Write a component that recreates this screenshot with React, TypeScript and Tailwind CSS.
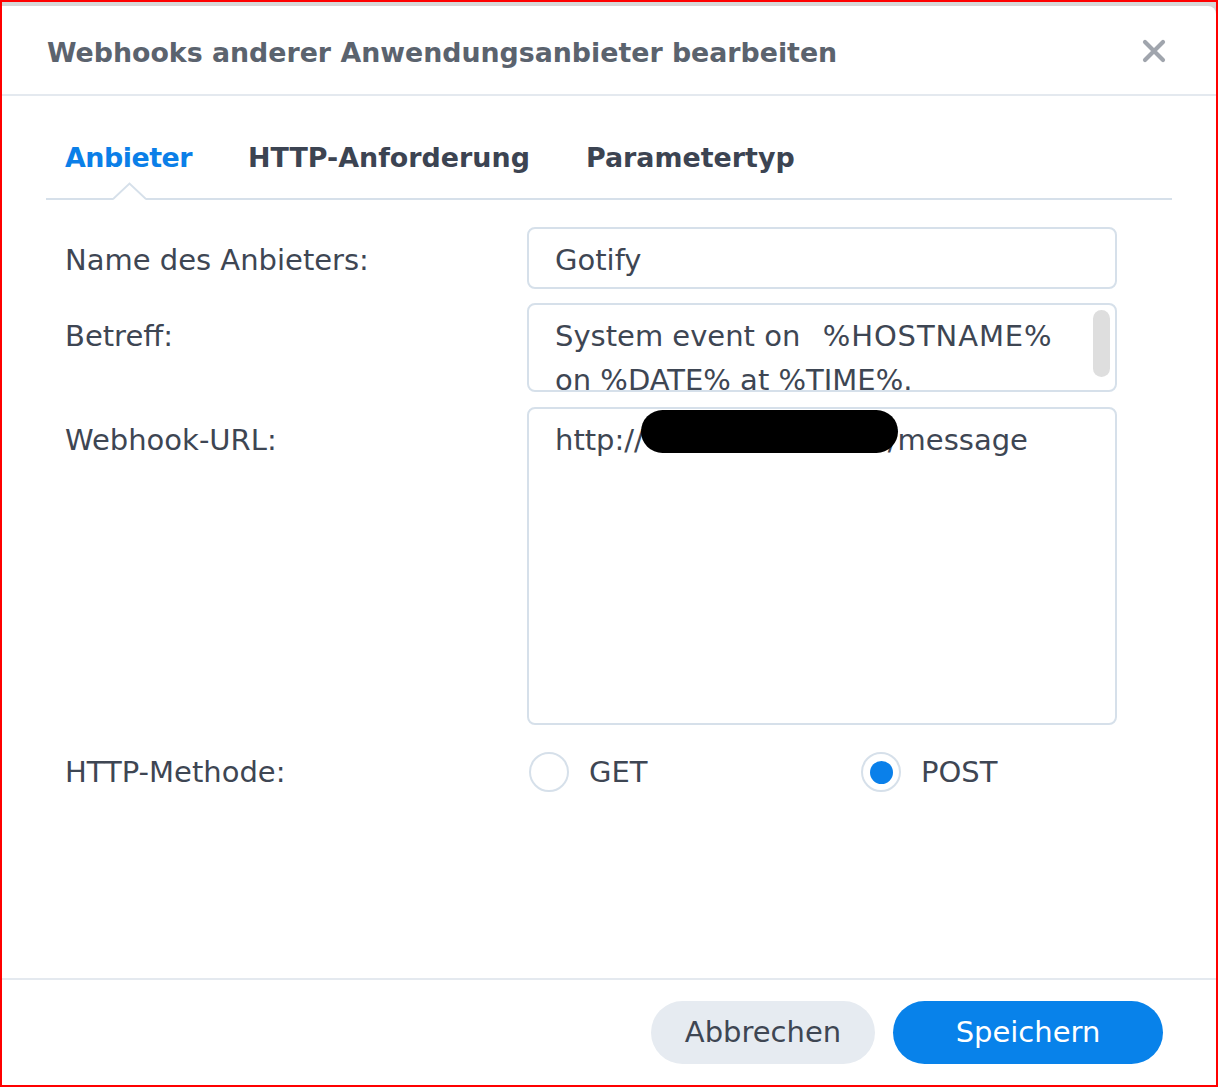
import React from "react";

const font = { fontFamily: '"DejaVu Sans", Verdana, sans-serif' };

function Field({ label, children }: { label: string; children: React.ReactNode }) {
  return (
    <div className="flex items-start">
      <div className="w-[462px] shrink-0 pt-[11px] text-[29px] leading-[44px] text-[#3e4653]">{label}</div>
      {children}
    </div>
  );
}

function Radio({ checked, label }: { checked?: boolean; label: string }) {
  return (
    <div className="flex items-center gap-[20px]">
      <div className="w-[40px] h-[40px] rounded-full border-2 border-[#d6e0ea] bg-white flex items-center justify-center">
        {checked && <div className="w-[23px] h-[23px] rounded-full bg-[#0a80ea]" />}
      </div>
      <span className="text-[29px] leading-[40px] text-[#3e4653]">{label}</span>
    </div>
  );
}

export default function App() {
  return (
    <div className="w-[1219px] h-[1088px] bg-white" style={font}>
      <div className="w-[1218px] h-[1087px] border-2 border-[#ff0000] bg-[#d7d7d7] flex flex-col">
        <div className="mt-[4px] flex-1 bg-white rounded-tr-[8px] flex flex-col">
          {/* Header */}
          <div className="h-[90px] shrink-0 flex items-center justify-between pt-[6px] pl-[45px] pr-[50px] border-b-2 border-[#e4e9ef]">
            <h1 className="text-[26.8px] font-bold text-[#5b636e]">Webhooks anderer Anwendungsanbieter bearbeiten</h1>
            <svg width="24" height="24" viewBox="0 0 24 24" className="mt-[-4px]">
              <path d="M3 3 L21 21 M21 3 L3 21" stroke="#a0a5ad" strokeWidth="4.2" strokeLinecap="round" />
            </svg>
          </div>

          {/* Tabs */}
          <div className="mx-[44px] relative border-b-2 border-[#d6e0ea]">
            <div className="flex gap-[56px] pl-[19px] pt-[43px] pb-[21px] text-[26.9px] leading-[38px] font-bold">
              <span className="text-[#0b7fe8] tracking-[-0.5px]">Anbieter</span>
              <span className="text-[#3c4452]">HTTP-Anforderung</span>
              <span className="text-[#3c4452]">Parametertyp</span>
            </div>
            <svg className="absolute left-[67px] bottom-[-2px]" width="33" height="18" viewBox="0 0 33 18">
              <polygon points="0,18 16.5,1.5 33,18" fill="white" />
              <polyline points="0,17 16.5,1.5 33,17" fill="none" stroke="#d6e0ea" strokeWidth="2" />
            </svg>
          </div>

          {/* Form */}
          <div className="ml-[63px] mt-[27px] flex flex-col">
            <Field label="Name des Anbieters:">
              <div className="w-[590px] h-[62px] rounded-[8px] border-2 border-[#d6e0ea] px-[26px] pt-[9px] text-[29px] leading-[44px] text-[#3e4653]">
                Gotify
              </div>
            </Field>
            <div className="h-[14px]" />
            <Field label="Betreff:">
              <div className="relative w-[590px] h-[89px] rounded-[8px] border-2 border-[#d6e0ea] overflow-hidden">
                <div className="px-[26px] pt-[9px] text-[29px] leading-[44px] text-[#3e4653] whitespace-pre">
                  {"System event on  "}
                  <span className="tracking-[0.9px] ml-[4px]">%HOSTNAME%</span>
                  {"\non %DATE% at %TIME%."}
                </div>
                <div className="absolute right-[5px] top-[5px] w-[17px] h-[67px] rounded-full bg-[#dedede]" />
              </div>
            </Field>
            <div className="h-[15px]" />
            <Field label="Webhook-URL:">
              <div className="relative w-[590px] h-[318px] rounded-[8px] border-2 border-[#d6e0ea] overflow-hidden">
                <div className="px-[26px] pt-[9px] text-[29px] leading-[44px] text-[#3e4653] whitespace-pre">
                  http://<span className="inline-block w-[244px]" />/message
                </div>
                <div className="absolute left-[112px] top-[1px] w-[257px] h-[43px] rounded-full bg-black" />
              </div>
            </Field>
            <div className="mt-[27px] flex items-center">
              <div className="w-[462px] shrink-0 text-[29px] leading-[40px] text-[#3e4653]">HTTP-Methode:</div>
              <div className="flex pl-[2px]">
                <div className="w-[332px]">
                  <Radio label="GET" />
                </div>
                <Radio checked label="POST" />
              </div>
            </div>
          </div>

          {/* Footer */}
          <div className="mt-auto h-[107px] shrink-0 border-t-2 border-[#e4e9ef] flex items-center justify-end gap-[18px] pr-[53px]">
            <button className="w-[224px] h-[63px] rounded-full bg-[#e6ebf1] text-[29px] text-[#3e4653]">Abbrechen</button>
            <button className="w-[270px] h-[63px] rounded-full bg-[#0882ea] text-[29px] text-white">Speichern</button>
          </div>
        </div>
      </div>
    </div>
  );
}
